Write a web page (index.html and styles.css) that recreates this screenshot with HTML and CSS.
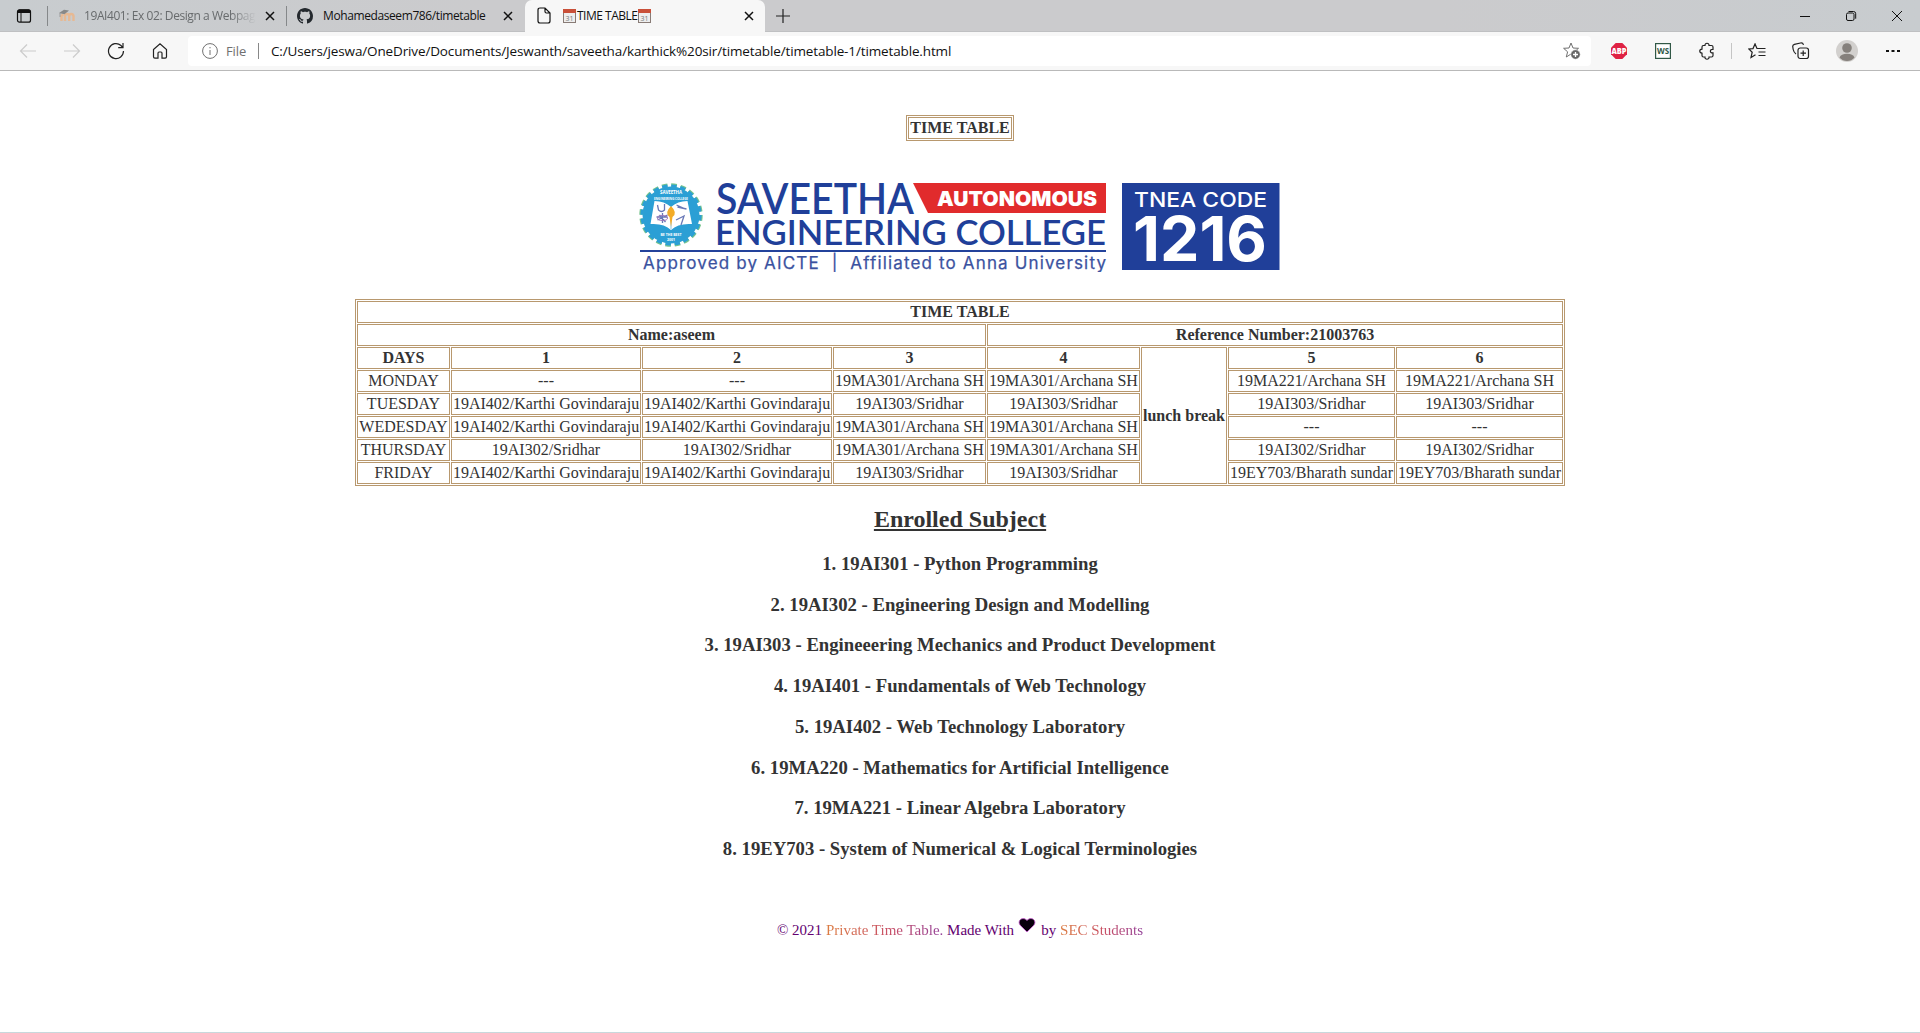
FILE: index.html
```html
<!DOCTYPE html>
<html lang="en">
<head>
<meta charset="utf-8">
<title>TIME TABLE</title>
<link rel="stylesheet" href="styles.css">
</head>
<body>
<header class="browser">
  <div class="tabstrip">
    <svg class="tab-menu" width="16" height="16" viewBox="0 0 16 16"><rect x="1.5" y="1.8" width="13" height="12.4" rx="2" fill="none" stroke="#111" stroke-width="1.2"/><path d="M1.5 5V3.5q0-2 2-2h9q2 0 2 2V5z" fill="#111"/><path d="M5 5v9" stroke="#111"/></svg>
    <i class="sep"></i>
    <div class="tab tab-moodle">
      <svg width="16" height="16" viewBox="0 0 16 16"><path d="M2.5 13V8.500q0-1.500 2-2M6 13V8q0-2 2-2t2.200 2v5M10.200 8q0-2 2-2t2.300 2v5" fill="none" stroke="#e6b994" stroke-width="2.400"/><path d="M0 5l5-3.200 5 .6-4.600 3.800z" fill="#888"/><path d="M1 5v4" stroke="#888" stroke-width=".7"/></svg>
      <span class="label faded">19AI401: Ex 02: Design a Webpage</span>
      <svg class="x" width="10" height="10" viewBox="0 0 10 10"><path d="M1 1l8 8M9 1l-8 8"/></svg>
    </div>
    <i class="sep"></i>
    <div class="tab tab-github">
      <svg width="16" height="16" viewBox="0 0 16 16"><path fill="#24292e" d="M8 0C3.580 0 0 3.580 0 8c0 3.540 2.290 6.530 5.470 7.590.4.070.55-.17.55-.38 0-.19-.01-.82-.01-1.490-2.010.37-2.530-.49-2.690-.94-.09-.23-.48-.94-.82-1.130-.28-.15-.68-.52-.01-.53.63-.01 1.080.58 1.230.82.72 1.210 1.870.87 2.330.66.07-.52.28-.87.51-1.070-1.780-.2-3.640-.89-3.640-3.950 0-.87.31-1.590.82-2.150-.08-.2-.36-1.020.08-2.120 0 0 .67-.21 2.200.82.64-.18 1.320-.27 2-.27s1.360.09 2 .27c1.530-1.040 2.200-.82 2.200-.82.44 1.100.16 1.920.08 2.120.51.56.82 1.270.82 2.150 0 3.070-1.870 3.750-3.650 3.950.29.25.54.73.54 1.480 0 1.070-.01 1.930-.01 2.200 0 .21.15.46.55.38A8.010 8.010 0 0 0 16 8c0-4.420-3.580-8-8-8z"/></svg>
      <span class="label repo">Mohamedaseem786/timetable</span>
      <svg class="x" width="10" height="10" viewBox="0 0 10 10"><path d="M1 1l8 8M9 1l-8 8"/></svg>
    </div>
    <div class="tab tab-active">
      <svg width="14" height="17" viewBox="0 0 14 17"><path d="M1 3q0-2 2-2h5l5 5v8q0 2-2 2H3q-2 0-2-2zM8 1v3.500q0 1.500 1.500 1.500H13" fill="none" stroke="#111" stroke-width="1.200"/></svg>
      <span class="label title"><svg class="cal" width="13" height="14" viewBox="0 0 13 14"><rect x=".5" y=".5" width="12" height="13" fill="#eee" stroke="#887b76"/><path d="M0 0h13v4H0z" fill="#c95039"/><text x="6.500" y="11.500">31</text></svg><b>TIME TABLE</b><svg class="cal" width="13" height="14" viewBox="0 0 13 14"><rect x=".5" y=".5" width="12" height="13" fill="#eee" stroke="#887b76"/><path d="M0 0h13v4H0z" fill="#c95039"/><text x="6.500" y="11.500">31</text></svg></span>
      <svg class="x" width="10" height="10" viewBox="0 0 10 10"><path d="M1 1l8 8M9 1l-8 8"/></svg>
    </div>
    <svg class="new-tab" width="14" height="14" viewBox="0 0 14 14"><path d="M7 0v14M0 7h14" stroke="#222" stroke-width="1.200"/></svg>
    <div class="window-buttons">
      <svg width="12" height="12" viewBox="0 0 12 12"><path d="M1 6.500h10"/></svg>
      <svg width="12" height="12" viewBox="0 0 12 12"><rect x="1.500" y="3" width="7.500" height="7.500" rx="1.500"/><path d="M3.500 1.500h5q2.200 0 2.200 2.200v5"/></svg>
      <svg width="12" height="12" viewBox="0 0 12 12"><path d="M1 1l10 10M11 1L1 11"/></svg>
    </div>
  </div>
  <div class="toolbar">
    <div class="nav">
      <svg class="off" width="18" height="18" viewBox="0 0 18 18"><path d="M17 9H1.500M8 2.500L1.500 9 8 15.500"/></svg>
      <svg class="off" width="18" height="18" viewBox="0 0 18 18"><path d="M1 9h15.500M10 2.500L16.500 9 10 15.500"/></svg>
      <svg width="18" height="18" viewBox="0 0 18 18"><path d="M16.500 9A7.500 7.500 0 1 1 14 3.500l1.500 1.800M16 1v4.700h-4.800"/></svg>
      <svg width="18" height="18" viewBox="0 0 18 18"><path d="M2.500 7.500L9 1.800l6.500 5.700v7.300q0 1.400-1.400 1.400H11v-5q0-1.200-1-1.200H8q-1 0-1 1.200v5H3.900q-1.400 0-1.400-1.400z"/></svg>
    </div>
    <div class="address">
      <svg width="16" height="16" viewBox="0 0 16 16"><circle cx="8" cy="8" r="7.400"/><path d="M8 7v5M8 4v1.300"/></svg>
      <span class="scheme">File</span><i></i>
      <span class="url">C:/Users/jeswa/OneDrive/Documents/Jeswanth/saveetha/karthick%20sir/timetable/timetable-1/timetable.html</span>
      <svg class="star" width="18" height="18" viewBox="0 0 18 18"><path d="M8 1l2 5 5.500.3-4 3.500L12.700 15 8 12l-4.700 3 1.300-5.200-4-3.500L6 6z"/><circle cx="12.500" cy="12.500" r="4.700" fill="#666" stroke="#fff" stroke-width=".5"/><path d="M10 12.500h5M12.500 10v5" stroke="#fff" stroke-width="1.300"/></svg>
    </div>
    <div class="tools">
      <svg width="16" height="16" viewBox="0 0 16 16"><path d="M4.700 0h6.600L16 4.700v6.600L11.300 16H4.700L0 11.300V4.700z" fill="#df2244" stroke="none"/><text x="8" y="11" class="abp" textLength="15" lengthAdjust="spacingAndGlyphs">ABP</text></svg>
      <svg class="t-ws" width="16" height="16" viewBox="0 0 16 16"><rect x=".6" y=".6" width="14.800" height="14.800" fill="#fff" stroke="#315846" stroke-width="1.200"/><text x="8" y="11" class="ws">WS</text></svg>
      <svg class="t-puzzle" width="16" height="18" viewBox="0 0 16 18"><path d="M3.500 3.500H6C5.500.5 10.500.5 10 3.500h2.500q1.500 0 1.500 1.500v2.400c-3.500-.5-3.500 4 0 3.500v2.600q0 1.500-1.500 1.500H10c.5 3-4.500 3-4 0H4.500Q3 15 3 13.500v-2.300c-3-.2-3-4 0-4.100V5q0-1.500 1.500-1.500"/></svg>
      <i></i>
      <svg class="t-fav" width="18" height="16" viewBox="0 0 18 16"><path d="M9 5.500L7 1 5 5.600.8 6l3.400 3.200L3 14.500l4.500-2.700M7 1l2 4.500h8.500M10.500 9h7M10.500 12.500h7"/></svg>
      <svg class="t-coll" width="18" height="18" viewBox="0 0 18 18"><rect x="6" y="6" width="10.500" height="10.500" rx="2.200"/><path d="M8.500 11.200H14M11.200 8.500V14M4 12Q1.800 10.500 1.200 7.500L.8 5Q.4 3 2.400 2.400L8.500 1q2.300-.5 3 1.800"/></svg>
      <svg class="t-user" width="22" height="22" viewBox="0 0 22 22"><circle cx="11" cy="11" r="11" fill="#d2d0ce" stroke="none"/><circle cx="11" cy="8" r="4.800" fill="#85807c" stroke="none"/><path d="M3.500 17.500q1.500-3.700 7.500-3.700t7.500 3.700Q15.500 21 11 21t-7.500-3.500z" fill="#85807c" stroke="none"/></svg>
      <svg class="t-more" width="14" height="4" viewBox="0 0 14 4"><path d="M0 1h3v2H0zM5.500 1h3v2h-3zM11 1h3v2h-3z" fill="#111" stroke="none"/></svg>
    </div>
  </div>
</header>
<main>
  <table class="heading"><tr><th>TIME TABLE</th></tr></table>
  <svg class="banner" width="642" height="92" viewBox="-1 0 642 92">
    <circle cx="31" cy="35" r="28.500" fill="#2b9fd5"/>
    <circle cx="31" cy="35" r="29.800" fill="none" stroke="#77c48d" stroke-width="3.800" stroke-dasharray="5.600 3.762"/>
    <circle cx="31" cy="35" r="29" fill="none" stroke="#2b9fd5" stroke-width="3.200" stroke-dasharray="5.400 3.711"/>
    <path d="M10.500 44l4-23q10 0 16.500 6 6.500-6 16.500-6L52 44q-14-1-21 6-7-7-20.500-6z" fill="#fff"/>
    <path d="M31 27v22" stroke="#8dc7df"/><path d="M31 26q-7 7-1.500 11L31 47l1.500-10q5.500-4-1.500-11z" fill="#f3ac28"/>
    <path d="M17.500 25l1 5q3 3 6 0v-6M36.500 25l9 4M37.500 27l9 2M36 40l8-4-3 9M17.500 40l10-5M19.500 35l6 7M16.500 37h11M22.500 33v10" fill="none" stroke="#6878b7" stroke-width="1.300"/>
    <ellipse cx="22.500" cy="38" rx="5" ry="2.500" fill="none" stroke="#a378ba"/>
    <text x="31" y="13.500" class="seal" textLength="22">SAVEETHA</text>
    <text x="31" y="19.500" class="seal tiny" textLength="34" lengthAdjust="spacingAndGlyphs">ENGINEERING COLLEGE</text>
    <text x="31" y="55.500" class="seal tiny" textLength="21">BE THE BEST</text>
    <text x="31" y="60.500" class="seal tiny">2001</text>
    <text x="76" y="34" class="name" textLength="198" lengthAdjust="spacingAndGlyphs">SAVEETHA</text>
    <text x="75" y="64.500" class="name line2" textLength="391" lengthAdjust="spacingAndGlyphs">ENGINEERING COLLEGE</text>
    <path d="M273 3h193v30H288z" fill="#e12b2c"/>
    <text x="297" y="26" class="auto" textLength="160" lengthAdjust="spacingAndGlyphs">AUTONOMOUS</text>
    <path d="M0 71h466" stroke="#23429b" stroke-width="2"/>
    <text x="3" y="88.500" class="approved" textLength="463" xml:space="preserve">Approved by AICTE  |  Affiliated to Anna University</text>
    <path d="M482 3h157.500v87H482z" fill="#203f99"/>
    <text x="494" y="27.300" class="tnea" textLength="133" lengthAdjust="spacingAndGlyphs">TNEA CODE</text>
    <text x="493" y="80.500" class="code" textLength="134" lengthAdjust="spacingAndGlyphs">1216</text>
  </svg>
  <table class="schedule">
    <colgroup><col class="c-day"><col class="c-long"><col class="c-long"><col class="c-mid"><col class="c-mid"><col class="c-break"><col class="c-late"><col class="c-late"></colgroup>
    <tr><th colspan="8">TIME TABLE</th></tr>
    <tr><th colspan="4">Name:aseem</th><th colspan="4">Reference Number:21003763</th></tr>
    <tr><th>DAYS</th><th>1</th><th>2</th><th>3</th><th>4</th><th rowspan="6">lunch break</th><th>5</th><th>6</th></tr>
    <tr><td>MONDAY</td><td>---</td><td>---</td><td>19MA301/Archana SH</td><td>19MA301/Archana SH</td><td>19MA221/Archana SH</td><td>19MA221/Archana SH</td></tr>
    <tr><td>TUESDAY</td><td>19AI402/Karthi Govindaraju</td><td>19AI402/Karthi Govindaraju</td><td>19AI303/Sridhar</td><td>19AI303/Sridhar</td><td>19AI303/Sridhar</td><td>19AI303/Sridhar</td></tr>
    <tr><td>WEDESDAY</td><td>19AI402/Karthi Govindaraju</td><td>19AI402/Karthi Govindaraju</td><td>19MA301/Archana SH</td><td>19MA301/Archana SH</td><td>---</td><td>---</td></tr>
    <tr><td>THURSDAY</td><td>19AI302/Sridhar</td><td>19AI302/Sridhar</td><td>19MA301/Archana SH</td><td>19MA301/Archana SH</td><td>19AI302/Sridhar</td><td>19AI302/Sridhar</td></tr>
    <tr><td>FRIDAY</td><td>19AI402/Karthi Govindaraju</td><td>19AI402/Karthi Govindaraju</td><td>19AI303/Sridhar</td><td>19AI303/Sridhar</td><td>19EY703/Bharath sundar</td><td>19EY703/Bharath sundar</td></tr>
  </table>
  <h2>Enrolled Subject</h2>
  <h3>1. 19AI301 - Python Programming</h3>
  <h3>2. 19AI302 - Engineering Design and Modelling</h3>
  <h3>3. 19AI303 - Engineeering Mechanics and Product Development</h3>
  <h3>4. 19AI401 - Fundamentals of Web Technology</h3>
  <h3>5. 19AI402 - Web Technology Laboratory</h3>
  <h3>6. 19MA220 - Mathematics for Artificial Intelligence</h3>
  <h3>7. 19MA221 - Linear Algebra Laboratory</h3>
  <h3>8. 19EY703 - System of Numerical &amp; Logical Terminologies</h3>
  <footer>© 2021 <span class="brand">Private Time Table.</span> Made With <svg class="heart" width="18" height="16" viewBox="0 0 18 16"><path d="M9 15L2.200 8.300C-1.500 3.500 5-1.200 9 3.500c4-4.700 10.500 0 6.800 4.800z" fill="#08000c" stroke="#d05bd9" stroke-width=".8"/></svg>  by <span class="brand students">SEC Students</span></footer>
</main>
</body>
</html>
```
FILE: styles.css
```css
* { box-sizing: border-box; }
body { margin: 0; height: 1033px; display: flex; flex-direction: column; overflow: hidden; background: #fff; color: #333; font: 16px/18px "Liberation Serif", serif; }
svg { flex: none; display: block; }
i { flex: none; }

.browser { flex: none; height: 71px; border-bottom: 1px solid #b9b9b9; background: #f7f7f7; font-family: "Open Sans", "Noto Sans", sans-serif; color: #111; }
.tabstrip { height: 32px; display: flex; align-items: center; background: linear-gradient(90deg, #c8cccf, #cbcbcd 25%, #cbcbcd 75%, #c8cccf); border-bottom: 1px solid #bfc0c2; }
.tab-menu { margin: 0 15px 0 16px; }
.sep { width: 1px; height: 20px; background: #85888a; }
.tab { display: flex; align-items: center; height: 32px; font-size: 12px; white-space: nowrap; }
.tab .label { flex: none; }
.tab .x { margin-left: auto; stroke: #111; stroke-width: 1.5; }
.tab-moodle { width: 238px; padding: 0 12px 0 11px; gap: 9px; }
.faded { width: 172px; overflow: hidden; color: #686b6d; letter-spacing: -.42px; -webkit-mask-image: linear-gradient(90deg, #000 85%, transparent); mask-image: linear-gradient(90deg, #000 85%, transparent); }
.tab-github { width: 238px; padding: 0 12px 0 10px; gap: 10px; }
.repo { letter-spacing: -.4px; }
.tab-active { width: 240px; padding: 0 11px 0 12px; gap: 12px; background: #f7f7f7; border-radius: 7px 7px 0 0; }
.title { display: flex; align-items: center; letter-spacing: -.5px; }
.title b { font-weight: 400; margin: 0 1px; }
.cal text { font: 7px "Open Sans", sans-serif; letter-spacing: 0; fill: #777; text-anchor: middle; }
.new-tab { margin-left: 11px; }
.window-buttons { display: flex; gap: 34px; margin: 0 17px 0 auto; fill: none; stroke: #111; stroke-width: 1; }

.toolbar { display: flex; align-items: center; height: 38px; }
.nav { display: flex; gap: 26px; width: 188px; padding-left: 19px; fill: none; stroke: #222; stroke-width: 1.2; }
.nav .off { stroke: #ccc; }
.address { width: 1403px; height: 30px; display: flex; align-items: center; padding: 0 10px 0 14px; border-radius: 4px; background: #fff; font-size: 14px; }
.address svg { fill: none; stroke: #707070; stroke-width: 1; }
.address i { width: 1px; height: 16px; margin: 0 12px 0 11px; background: #888; }
.scheme { width: 21px; margin-left: 8px; color: #707070; font-size: 13px; letter-spacing: -.1px; }
.url { font-size: 13.500px; letter-spacing: -.135px; white-space: nowrap; }
.address .star { margin-left: auto; }
.tools { flex: 1; display: flex; align-items: center; padding-left: 20px; fill: none; stroke: #222; stroke-width: 1.2; }
.tools text { stroke: none; text-anchor: middle; font-family: "Open Sans", sans-serif; font-weight: 700; }
.tools .abp { font-size: 8px; font-weight: 800; fill: #fff; }
.tools .ws { font-size: 8px; fill: #315846; }
.t-ws { margin-left: 28px; }
.t-puzzle { margin-left: 28px; }
.tools i { width: 1px; height: 16px; margin: 0 16px 0 16px; background: #c5c5c5; }
.t-coll { margin-left: 26px; }
.t-user { margin-left: 26px; }
.t-more { margin-left: 28px; }

main { flex: 1; display: flex; flex-direction: column; align-items: center; padding-top: 44px; border-bottom: 1px solid #c8d8dc; }
table { flex: none; border: 1px solid #b8986e; border-spacing: 1px; table-layout: fixed; }
th, td { height: 22px; padding: 1px; border: 1px solid #b8986e; text-align: center; white-space: nowrap; line-height: 18px; }
.heading { width: 108px; }
.banner { flex: none; margin: 39px 0 27px; }
.schedule { width: 1210px; }
.c-day { width: 93px; }
.c-long { width: 190px; }
.c-mid { width: 153px; }
.c-break { width: 86px; }
.c-late { width: 167px; }
.seal { font: 700 4.500px "Open Sans", sans-serif; fill: #fff; text-anchor: middle; }
.tiny { font-size: 3.500px; }
.name { font: 600 41.500px Lato, sans-serif; fill: #203f99; }
.line2 { font-size: 34px; }
.auto { font: 900 20.500px Inter, sans-serif; fill: #fff; }
.approved { font: 400 17px Inter, sans-serif; fill: #3b529f; stroke: #3b529f; stroke-width: .25; }
.tnea { font: 500 20.500px Inter, sans-serif; fill: #fff; }
.code { font: 700 62px Inter, sans-serif; fill: #fff; }

h2 { flex: none; margin: 20px 0 0; font-size: 24px; line-height: 27px; text-decoration: underline; }
h3 { flex: none; margin: 18.720px 0 0; font-size: 18.720px; line-height: 22px; }
h2 + h3 { margin-top: 20px; }
footer { margin-top: 52px; height: 36px; display: flex; align-items: center; font-size: 15px; white-space: pre; color: #630070; }
.brand { background: linear-gradient(90deg, #dc7d42, #c85068 55%, #934099); -webkit-background-clip: text; background-clip: text; color: transparent; }
.heart { margin: 0 -2px 10px 0; }
```
